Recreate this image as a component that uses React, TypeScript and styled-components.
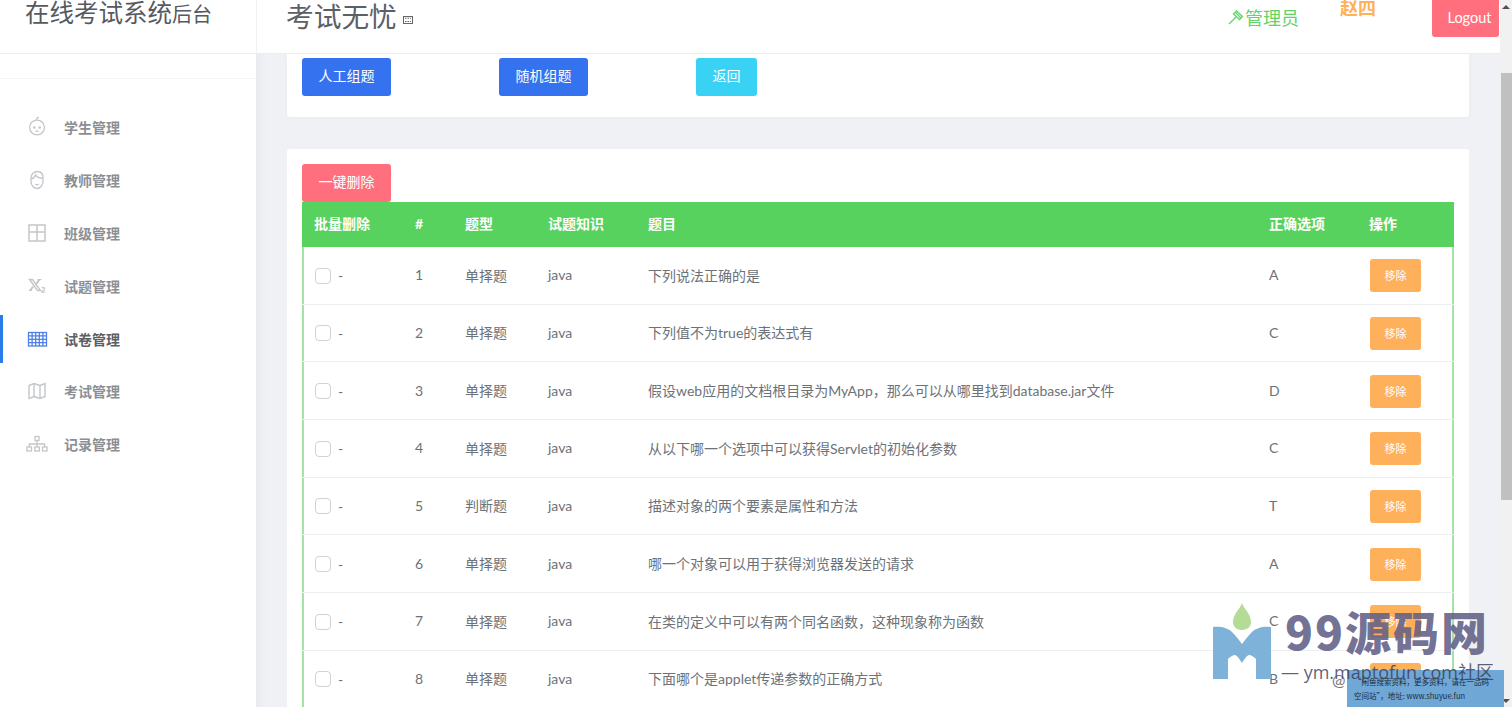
import React from "react";
import styled, { createGlobalStyle } from "styled-components";

const SANS = `Lato, "Noto Sans CJK SC", sans-serif`;
const GRID = "101px 50px 83px 100px 621px 100px 97px";

const Global = createGlobalStyle`
  html, body { margin: 0; padding: 0; height: 100%; overflow: hidden; background: #fff; }
  #root { height: 100%; }
  * { box-sizing: border-box; }
`;

const Page = styled.div`
  position: relative;
  display: flex;
  width: 1512px;
  height: 707px;
  overflow: hidden;
  font-family: ${SANS};
  color: #6c757d;
`;
const Column = styled.div`
  width: 1500px;
  height: 707px;
  display: flex;
  flex-direction: column;
`;
const Header = styled.header`
  height: 54px;
  flex: none;
  display: flex;
  background: #fff;
  border-bottom: 1px solid #eceef1;
`;
const Brand = styled.div`
  width: 257px;
  flex: none;
  border-right: 1px solid #eff0f2;
  padding-left: 25px;
  color: #555a60;
  font-size: 24.5px;
  line-height: 26px;
  white-space: nowrap;
  small { font-size: 20px; }
`;
const Title = styled.div`
  padding: 3px 0 0 29px;
  font-size: 27.7px;
  line-height: 28px;
  color: #5b6066;
  display: flex;
  align-items: flex-start;
  flex: 1;
  svg { margin: 13px 0 0 6px; }
`;
const Role = styled.div`
  display: flex;
  align-items: center;
  color: #62d367;
  font-size: 18px;
  height: 33px;
  margin-right: 41px;
  svg { margin-right: 1px; }
`;
const User = styled.div`
  color: #ffb05a;
  font-size: 18px;
  font-weight: 700;
  line-height: 18px;
  margin: -1px 56px 0 0;
`;
const Logout = styled.button`
  width: 67px;
  height: 37px;
  border: 0;
  border-radius: 0 0 3px 3px;
  margin-right: 1px;
  padding: 0 0 3px 8px;
  background: #ff6f7d;
  color: #fff;
  font: 14.5px ${SANS};
`;
const Body = styled.div`
  flex: 1;
  display: flex;
  min-height: 0;
`;
const Sidebar = styled.aside`
  width: 256px;
  flex: none;
  background: #fff;
`;
const SideGap = styled.div`
  height: 25px;
  border-bottom: 1px solid #f3f4f6;
  margin-bottom: 22px;
`;
const MenuItem = styled.div<{ $active?: boolean }>`
  position: relative;
  height: 52.8px;
  display: flex;
  align-items: center;
  padding-left: 26px;
  color: ${(p) => (p.$active ? "#5a5f65" : "#8b8f94")};
  font-size: 14px;
  font-weight: 700;
  svg { flex: none; margin-right: 16px; }
  ${(p) =>
    p.$active
      ? `&::before {
          content: "";
          position: absolute;
          left: 0;
          top: 3px;
          width: 3px;
          height: 48px;
          background: #2a7de9;
        }`
      : ""}
`;
const Content = styled.main`
  flex: 1;
  background: #eff1f5;
  padding: 0 31px 0 31px;
  overflow: hidden;
  box-shadow: inset 10px 0 10px -8px #e3e5ea;
`;
const TopCard = styled.section`
  height: 63px;
  background: #fff;
  border-radius: 0 0 3px 3px;
  padding: 4px 15px 0;
  display: flex;
  gap: 108px;
  align-items: flex-start;
  box-shadow: 0 1px 4px rgba(60, 70, 90, 0.04);
`;
const ListCard = styled.section`
  margin-top: 32px;
  background: #fff;
  border-radius: 3px 3px 0 0;
  padding: 15px 15px 0;
`;
const Btn = styled.button<{ $bg: string; $w: number }>`
  width: ${(p) => p.$w}px;
  height: 38px;
  border: 0;
  border-radius: 3px;
  background: ${(p) => p.$bg};
  color: #fff;
  font: 14px ${SANS};
  padding: 0 0 4px;
  display: block;
`;
const Table = styled.div`
  border-left: 2px solid #a3e4a6;
  border-right: 2px solid #a3e4a6;
`;
const HeadRow = styled.div`
  display: grid;
  grid-template-columns: ${GRID};
  margin: 0 -2px;
  height: 45px;
  padding-bottom: 3px;
  align-items: center;
  background: #58d25e;
  color: #fff;
  font-size: 14px;
  font-weight: 700;
`;
const BodyRow = styled.div`
  display: grid;
  grid-template-columns: ${GRID};
  margin: 0 -2px;
  height: 57.67px;
  padding-bottom: 1px;
  align-items: center;
  border-bottom: 1px solid #eceef0;
  font-size: 14px;
  color: #6c7278;
`;
const Cell = styled.div`
  padding-left: 12px;
  white-space: nowrap;
`;
const CheckCell = styled(Cell)`
  display: flex;
  align-items: center;
  gap: 7px;
  padding-left: 13px;
  padding-top: 2px;
`;
const Check = styled.span`
  width: 16px;
  height: 16px;
  border: 1px solid #cfd2d6;
  border-radius: 4px;
`;
const Remove = styled.button`
  width: 51px;
  height: 33px;
  margin: 2px 0 0 1px;
  border: 0;
  border-radius: 3px;
  background: #ffb05a;
  color: #fff;
  font: 11px ${SANS};
  padding: 0 0 1px;
  display: block;
`;
const Scrollbar = styled.div`
  width: 12px;
  height: 707px;
  background: #f1f1f1;
  display: flex;
  flex-direction: column;
  align-items: center;
`;
const Arrow = styled.div<{ $down?: boolean }>`
  width: 0;
  height: 0;
  margin: ${(p) => (p.$down ? "0 0 4px" : "5px 0 0")};
  border-left: 4px solid transparent;
  border-right: 4px solid transparent;
  ${(p) => (p.$down ? "border-top: 4px solid #505050;" : "border-bottom: 4px solid #505050;")}
`;
const Thumb = styled.div`
  width: 11px;
  height: 427px;
  margin: 64px 0 auto 1px;
  background: #c0c0c0;
`;
const Mark = styled.div`
  position: absolute;
  left: 1213px;
  top: 600px;
  width: 299px;
  height: 107px;
  pointer-events: none;
`;
const MarkLogo = styled.svg`
  position: absolute;
  left: 0;
  top: 3px;
`;
const MarkName = styled.div`
  position: absolute;
  left: 72px;
  top: 0;
  font: 900 46px/60px "Noto Sans CJK SC", sans-serif;
  letter-spacing: 2px;
  color: rgba(98, 96, 134, 0.88);
  white-space: nowrap;
`;
const MarkUrl = styled.div`
  position: absolute;
  left: 68px;
  top: 60px;
  font: 18px/24px "Open Sans", "Noto Sans CJK SC", sans-serif;
  color: rgba(60, 60, 85, 0.82);
  white-space: nowrap;
`;
const At = styled.div`
  position: absolute;
  left: 119px;
  top: 70px;
  font: 16px/20px ${SANS};
  color: #777;
`;
const Notice = styled.div`
  position: absolute;
  left: 134px;
  top: 70px;
  width: 157px;
  height: 37px;
  background: #6fa8d6;
  color: #1c2c3c;
  font: 7.5px/14px "Noto Sans CJK SC", sans-serif;
  padding: 5px 0 0 7px;
  white-space: nowrap;
`;

const stroke = { fill: "none", stroke: "#c4c6c9", strokeWidth: 1.3 } as const;
const Baby = () => (
  <svg width="22" height="22" viewBox="0 0 22 22" {...stroke}>
    <circle cx="11" cy="11.500" r="7.400" />
    <path d="M11 4.100c-1-1.500 0-2.900 1.800-2.500" />
    <circle cx="8.300" cy="11.500" r=".7" />
    <circle cx="13.700" cy="11.500" r=".7" />
    <path d="M9.500 14.800c1 .7 2 .7 3 0" />
  </svg>
);
const Man = () => (
  <svg width="22" height="22" viewBox="0 0 22 22" {...stroke}>
    <path d="M5 9c0-4 3-6.500 6.500-6.500S17 5 17 9v3.500c0 4-3 7-6 7s-6-3-6-7z" />
    <path d="M5.200 10c2-.4 3.600-2 4.300-4 1.500 2 4 3.200 7.300 3.400" />
    <path d="M9.300 15c1 .8 2.400.8 3.400 0" />
  </svg>
);
const Grid4 = () => (
  <svg width="22" height="22" viewBox="0 0 22 22" {...stroke} strokeWidth={1.5}>
    <rect x="3" y="3" width="16" height="16" />
    <path d="M11 3v16M3 10h16" />
  </svg>
);
const Sub = () => (
  <svg width="22" height="22" viewBox="0 0 22 22" fill="none" stroke="#c4c6c9">
    <path d="M3.500 4.500h3l8 11h-3z" strokeWidth="1.400" />
    <path d="M13.500 4.500 9.800 9.500M7.200 11.500l-3.200 4" strokeWidth="2" />
    <path d="M3 4.500h3.500M11.500 4.500H15.500M3 15.500h3M11.500 15.500H15.500" strokeWidth="1.200" />
    <path d="M15.800 13.300c.4-.9 3-.9 3 .4 0 1.100-1.900 1.800-3 3.500h3.400" strokeWidth="1.200" />
  </svg>
);
const Sheet = () => (
  <svg width="22" height="22" viewBox="0 0 22 22" fill="none" stroke="#4f7fe8" strokeWidth="1.300">
    <rect x="2.500" y="4.500" width="18" height="13.500" />
    <path d="M6.100 4.500V18M9.700 4.500V18M13.300 4.500V18M16.900 4.500V18M2.500 7.900h18M2.500 11.300h18M2.500 14.700h18" />
  </svg>
);
const MapIcon = () => (
  <svg width="22" height="22" viewBox="0 0 22 22" {...stroke} strokeWidth={1.4}>
    <path d="M3 5.500 8 3.500l6 2 5-2v13l-5 2-6-2-5 2z" />
    <path d="M8 3.500v13M14 5.500v13" />
  </svg>
);
const Sitemap = () => (
  <svg width="22" height="22" viewBox="0 0 22 22" {...stroke} strokeWidth={1.300}>
    <rect x="9" y="3.500" width="4" height="4" />
    <rect x="1" y="14" width="4.500" height="4" />
    <rect x="8.800" y="14" width="4.500" height="4" />
    <rect x="16.500" y="14" width="4.500" height="4" />
    <path d="M11 7.500V14M3.300 14v-3h15.400v3" />
  </svg>
);
const Hammer = () => (
  <svg width="16" height="16" viewBox="0 0 16 16" fill="none" stroke="#62d367" strokeWidth="1.300">
    <path d="M1 15 8 8" />
    <path d="M5.500 5 8.500 2l6 5.500-3 3z" />
    <path d="M7.500 3.500 13 9" />
  </svg>
);
const Tofu = () => (
  <svg width="10" height="8" viewBox="0 0 10 8">
    <rect x=".5" y=".5" width="9" height="7" fill="#fff" stroke="#666" />
    <path d="M2 2.200h1.500M4.500 2.200H6M7 2.200h1M2 5.500h1.500M4.500 5.500H6M7 5.500h1" stroke="#666" />
  </svg>
);

const MENU = [
  { label: "学生管理", icon: <Baby /> },
  { label: "教师管理", icon: <Man /> },
  { label: "班级管理", icon: <Grid4 /> },
  { label: "试题管理", icon: <Sub /> },
  { label: "试卷管理", icon: <Sheet />, active: true },
  { label: "考试管理", icon: <MapIcon /> },
  { label: "记录管理", icon: <Sitemap /> },
];

const ROWS = [
  ["1", "单择题", "下列说法正确的是", "A"],
  ["2", "单择题", "下列值不为true的表达式有", "C"],
  ["3", "单择题", "假设web应用的文档根目录为MyApp，那么可以从哪里找到database.jar文件", "D"],
  ["4", "单择题", "从以下哪一个选项中可以获得Servlet的初始化参数", "C"],
  ["5", "判断题", "描述对象的两个要素是属性和方法", "T"],
  ["6", "单择题", "哪一个对象可以用于获得浏览器发送的请求", "A"],
  ["7", "单择题", "在类的定义中可以有两个同名函数，这种现象称为函数", "C"],
  ["8", "单择题", "下面哪个是applet传递参数的正确方式", "B"],
];

export default function App() {
  return (
    <Page>
      <Global />
      <Column>
        <Header>
          <Brand>
            在线考试系统<small>后台</small>
          </Brand>
          <Title>
            考试无忧
            <Tofu />
          </Title>
          <Role>
            <Hammer />
            管理员
          </Role>
          <User>赵四</User>
          <Logout>Logout</Logout>
        </Header>
        <Body>
          <Sidebar>
            <SideGap />
            {MENU.map((m) => (
              <MenuItem key={m.label} $active={m.active}>
                {m.icon}
                {m.label}
              </MenuItem>
            ))}
          </Sidebar>
          <Content>
            <TopCard>
              <Btn $bg="#3572f0" $w={89}>人工组题</Btn>
              <Btn $bg="#3572f0" $w={89}>随机组题</Btn>
              <Btn $bg="#39d2f5" $w={61}>返回</Btn>
            </TopCard>
            <ListCard>
              <Btn $bg="#ff6f7d" $w={89}>一键删除</Btn>
              <Table>
                <HeadRow>
                  <Cell>批量删除</Cell>
                  <Cell>#</Cell>
                  <Cell>题型</Cell>
                  <Cell>试题知识</Cell>
                  <Cell>题目</Cell>
                  <Cell>正确选项</Cell>
                  <Cell>操作</Cell>
                </HeadRow>
                {ROWS.map((r) => (
                  <BodyRow key={r[0]}>
                    <CheckCell>
                      <Check />-
                    </CheckCell>
                    <Cell>{r[0]}</Cell>
                    <Cell>{r[1]}</Cell>
                    <Cell>java</Cell>
                    <Cell>{r[2]}</Cell>
                    <Cell>{r[3]}</Cell>
                    <Cell>
                      <Remove>移除</Remove>
                    </Cell>
                  </BodyRow>
                ))}
              </Table>
            </ListCard>
          </Content>
        </Body>
      </Column>
      <Scrollbar>
        <Arrow />
        <Thumb />
        <Arrow $down />
      </Scrollbar>
      <Mark>
        <MarkLogo width="60" height="78" viewBox="0 0 60 78">
          <path d="M29 0c2 6 9 11 9 19 0 5-4 8-9 8s-9-3-9-8c0-8 7-13 9-19z" fill="#b5dc97" />
          <path
            fillRule="evenodd"
            d="M0 24c8-1 15 1 19 5 4 4 7 8 10 12 3-4 6-8 10-12 4-4 11-6 19-5v52H43V56c-2-2-5-4-7-4-3 1-5 5-7 8-2-3-4-7-7-8-2 0-5 2-7 4v20H0z"
            fill="#7fb2d9"
          />
        </MarkLogo>
        <MarkName>99源码网</MarkName>
        <At>@</At>
        <Notice>
          “闲鱼搜索资料，更多资料，请在一品码
          <br />
          空间站”，地址: www.shuyue.fun
        </Notice>
        <MarkUrl>— ym.maptofun.com社区</MarkUrl>
      </Mark>
    </Page>
  );
}
